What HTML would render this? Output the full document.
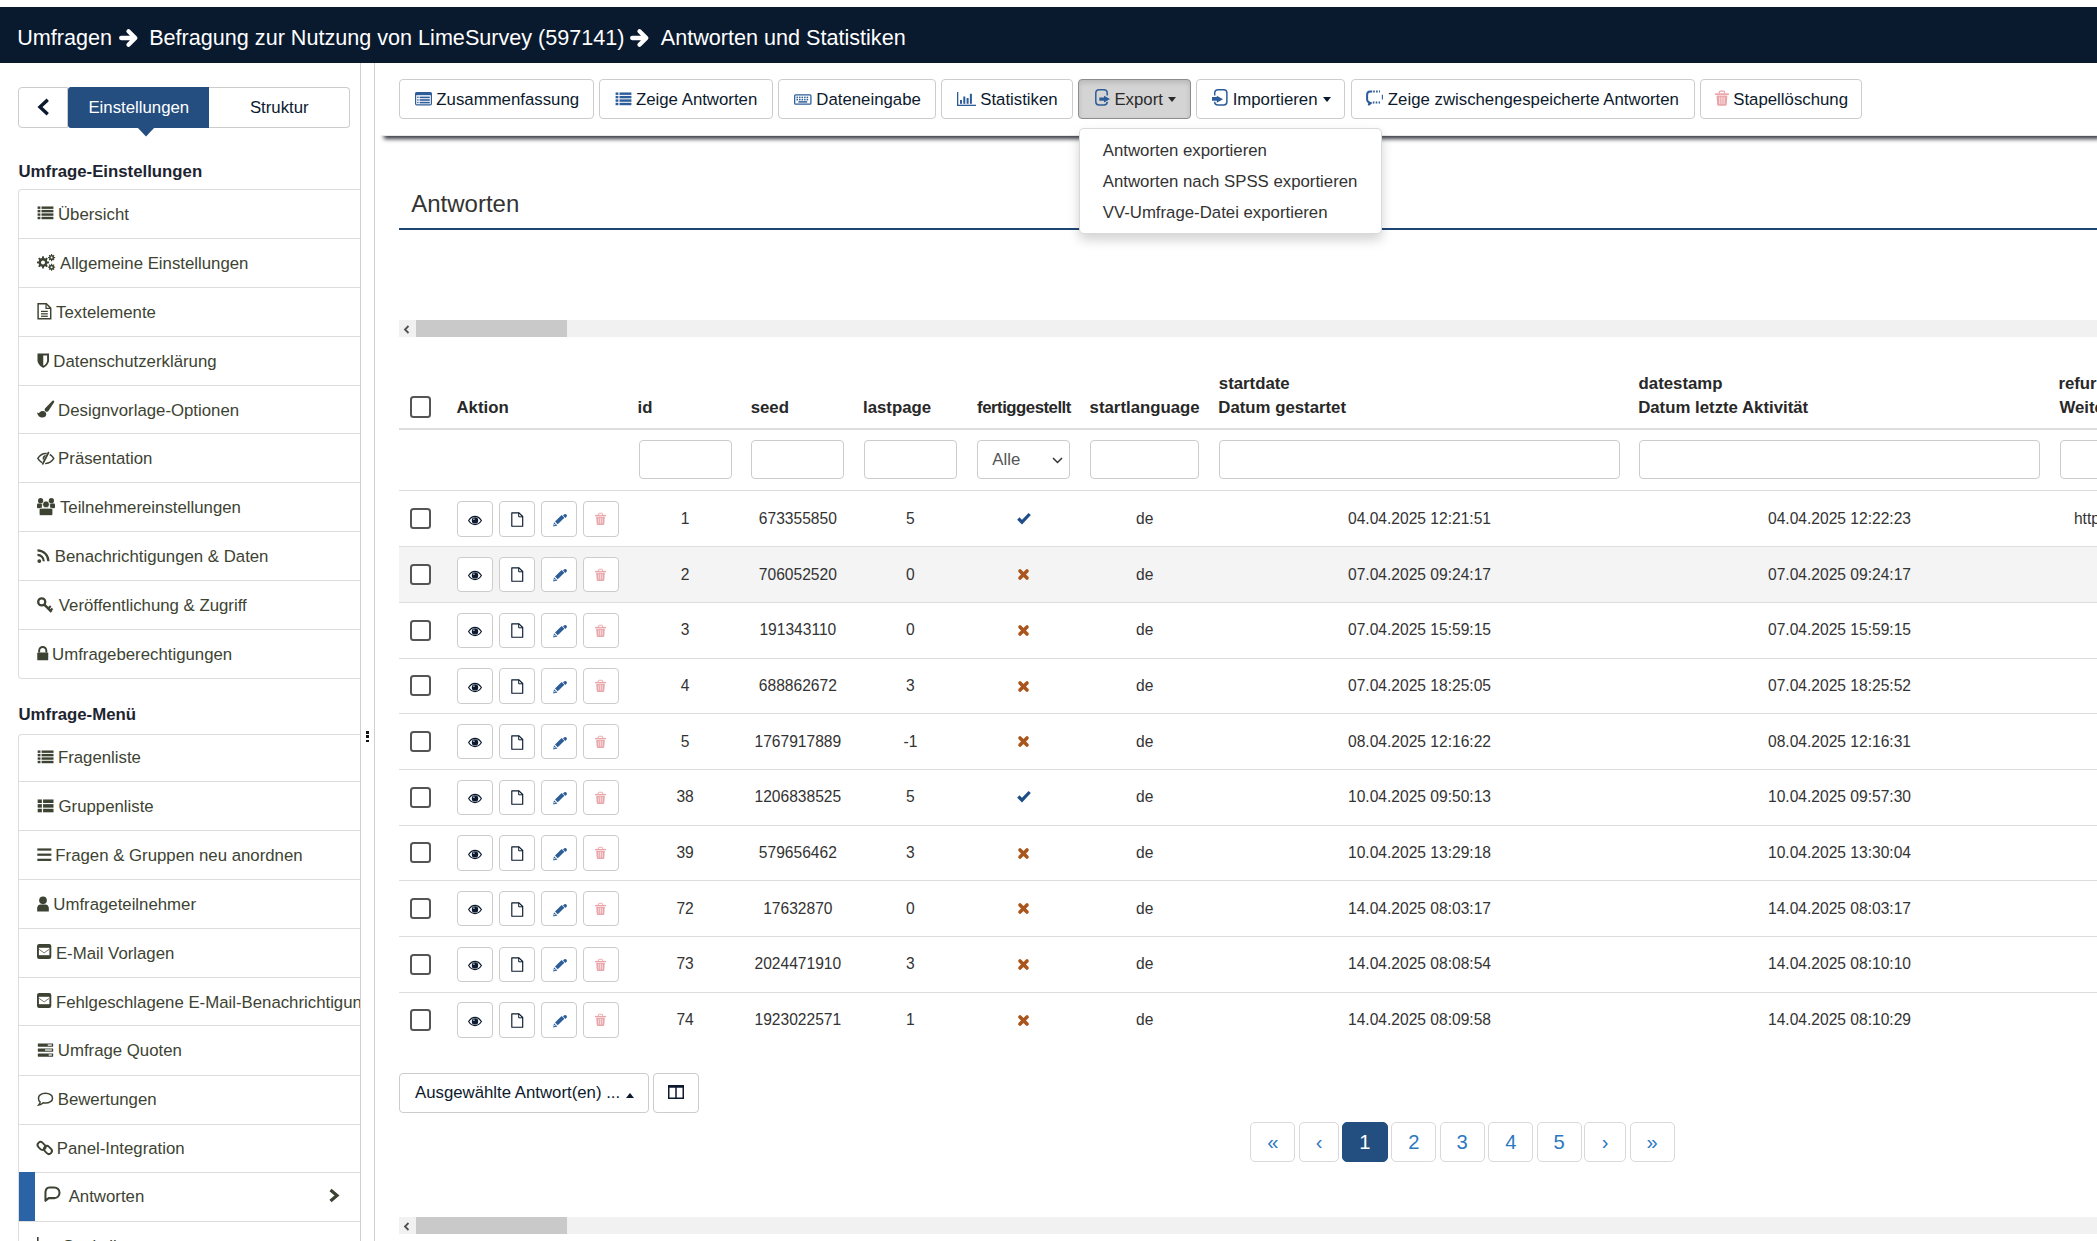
<!DOCTYPE html>
<html><head><meta charset="utf-8"><title>Antworten</title>
<style>
html,body{margin:0;padding:0;background:#fff;}
body{width:2097px;height:1241px;overflow:hidden;position:relative;font-family:"Liberation Sans", sans-serif;}
.t{position:absolute;white-space:nowrap;line-height:1;}
.r{position:absolute;box-sizing:border-box;}
.i{position:absolute;overflow:visible;}
</style></head><body>
<div class="r" style="left:0.00px;top:7.00px;width:2097.00px;height:56.00px;background:#091a2f;"></div>
<div class="t" style="left:17.20px;top:27.10px;font-size:21.6px;color:#fff;font-weight:normal;">Umfragen</div>
<svg class="i" style="left:118.60px;top:28.00px;" width="19" height="20" viewBox="0 0 19 20" fill="currentColor"><path d="M2.2 10H15.5M9.5 3.2L16.3 10L9.5 16.8" fill="none" stroke="#fff" stroke-width="4.3" stroke-linecap="round" stroke-linejoin="round"/></svg>
<div class="t" style="left:149.20px;top:27.10px;font-size:21.6px;color:#fff;font-weight:normal;">Befragung zur Nutzung von LimeSurvey (597141)</div>
<svg class="i" style="left:630.40px;top:28.00px;" width="19" height="20" viewBox="0 0 19 20" fill="currentColor"><path d="M2.2 10H15.5M9.5 3.2L16.3 10L9.5 16.8" fill="none" stroke="#fff" stroke-width="4.3" stroke-linecap="round" stroke-linejoin="round"/></svg>
<div class="t" style="left:660.80px;top:27.10px;font-size:21.6px;color:#fff;font-weight:normal;">Antworten und Statistiken</div>
<div class="r" style="left:18.00px;top:87.00px;width:50.00px;height:41.00px;border:1px solid #ccc;border-radius:4px 0 0 4px;background:#fff;"></div>
<svg class="i" style="left:36.00px;top:98.00px;" width="14" height="18" viewBox="0 0 14 18" fill="currentColor"><path d="M10.5 3L4 9L10.5 15" fill="none" stroke="#0b1a2e" stroke-width="3.4" stroke-linecap="square"/></svg>
<div class="r" style="left:209.00px;top:87.00px;width:141.00px;height:41.00px;border:1px solid #ccc;border-left:none;border-radius:0 4px 4px 0;background:#fff;"></div>
<div class="r" style="left:68.00px;top:87.00px;width:141.00px;height:41.00px;background:#234e7f;border-radius:3px 0 0 3px;"></div>
<svg class="i" style="left:137.00px;top:127.00px;" width="18" height="10" viewBox="0 0 18 10" fill="currentColor"><path d="M0 0H18L9 9.5Z" fill="#234e7f"/></svg>
<div class="t" style="left:-161.20px;width:600px;text-align:center;top:100.10px;font-size:16.8px;color:#fff;font-weight:normal;">Einstellungen</div>
<div class="t" style="left:-20.70px;width:600px;text-align:center;top:100.10px;font-size:16.8px;color:#0b1a2e;font-weight:normal;">Struktur</div>
<div class="t" style="left:18.50px;top:164.10px;font-size:16.8px;color:#1d2430;font-weight:bold;">Umfrage-Einstellungen</div>
<div class="t" style="left:18.50px;top:707.10px;font-size:16.8px;color:#1d2430;font-weight:bold;">Umfrage-Menü</div>
<div style="position:absolute;left:0;top:0;width:360px;height:1241px;overflow:hidden">
<div class="r" style="left:18.00px;top:189.00px;width:343.00px;height:490.00px;border:1px solid #ddd;border-right:none;border-radius:4px 0 0 4px;background:#fff;"></div>
<div class="r" style="left:19.00px;top:238.00px;width:341.00px;height:1.00px;background:#ddd;"></div>
<div class="r" style="left:19.00px;top:287.00px;width:341.00px;height:1.00px;background:#ddd;"></div>
<div class="r" style="left:19.00px;top:336.00px;width:341.00px;height:1.00px;background:#ddd;"></div>
<div class="r" style="left:19.00px;top:385.00px;width:341.00px;height:1.00px;background:#ddd;"></div>
<div class="r" style="left:19.00px;top:433.00px;width:341.00px;height:1.00px;background:#ddd;"></div>
<div class="r" style="left:19.00px;top:482.00px;width:341.00px;height:1.00px;background:#ddd;"></div>
<div class="r" style="left:19.00px;top:531.00px;width:341.00px;height:1.00px;background:#ddd;"></div>
<div class="r" style="left:19.00px;top:580.00px;width:341.00px;height:1.00px;background:#ddd;"></div>
<div class="r" style="left:19.00px;top:629.00px;width:341.00px;height:1.00px;background:#ddd;"></div>
<svg class="i" style="left:37.00px;top:206.40px;" width="17" height="13.6" viewBox="0 0 17 14.6" fill="#3d4333"><rect x="0" y="0.5" width="3" height="2.6"/><rect x="0" y="4.2" width="3" height="2.6"/><rect x="0" y="7.9" width="3" height="2.6"/><rect x="0" y="11.6" width="3" height="2.6"/><rect x="4.2" y="0.5" width="12.8" height="2.6"/><rect x="4.2" y="4.2" width="12.8" height="2.6"/><rect x="4.2" y="7.9" width="12.8" height="2.6"/><rect x="4.2" y="11.6" width="12.8" height="2.6"/></svg>
<div class="t" style="left:58.00px;top:207.10px;font-size:16.8px;color:#3d4333;font-weight:normal;">Übersicht</div>
<svg class="i" style="left:37.00px;top:254.30px;" width="18.3" height="17" viewBox="0 0 18.3 17" fill="#3d4333"><path fill-rule="evenodd" d="M4.98 4.02 L5.19 2.35 L6.81 2.35 L7.02 4.02 L8.38 4.58 L9.70 3.55 L10.85 4.70 L9.82 6.02 L10.38 7.38 L12.05 7.59 L12.05 9.21 L10.38 9.42 L9.82 10.78 L10.85 12.10 L9.70 13.25 L8.38 12.22 L7.02 12.78 L6.81 14.45 L5.19 14.45 L4.98 12.78 L3.62 12.22 L2.30 13.25 L1.15 12.10 L2.18 10.78 L1.62 9.42 L-0.05 9.21 L-0.05 7.59 L1.62 7.38 L2.18 6.02 L1.15 4.70 L2.30 3.55 L3.62 4.58ZM4.00 8.40A2.0 2.0 0 1 0 8.00 8.40A2.0 2.0 0 1 0 4.00 8.40ZM13.98 1.07 L14.08 0.04 L15.12 0.04 L15.22 1.07 L15.95 1.38 L16.75 0.71 L17.49 1.45 L16.82 2.25 L17.13 2.98 L18.16 3.08 L18.16 4.12 L17.13 4.22 L16.82 4.95 L17.49 5.75 L16.75 6.49 L15.95 5.82 L15.22 6.13 L15.12 7.16 L14.08 7.16 L13.98 6.13 L13.25 5.82 L12.45 6.49 L11.71 5.75 L12.38 4.95 L12.07 4.22 L11.04 4.12 L11.04 3.08 L12.07 2.98 L12.38 2.25 L11.71 1.45 L12.45 0.71 L13.25 1.38ZM13.60 3.60A1.0 1.0 0 1 0 15.60 3.60A1.0 1.0 0 1 0 13.60 3.60ZM13.98 10.67 L14.08 9.64 L15.12 9.64 L15.22 10.67 L15.95 10.98 L16.75 10.31 L17.49 11.05 L16.82 11.85 L17.13 12.58 L18.16 12.68 L18.16 13.72 L17.13 13.82 L16.82 14.55 L17.49 15.35 L16.75 16.09 L15.95 15.42 L15.22 15.73 L15.12 16.76 L14.08 16.76 L13.98 15.73 L13.25 15.42 L12.45 16.09 L11.71 15.35 L12.38 14.55 L12.07 13.82 L11.04 13.72 L11.04 12.68 L12.07 12.58 L12.38 11.85 L11.71 11.05 L12.45 10.31 L13.25 10.98ZM13.60 13.20A1.0 1.0 0 1 0 15.60 13.20A1.0 1.0 0 1 0 13.60 13.20Z"/></svg>
<div class="t" style="left:59.97px;top:256.10px;font-size:16.8px;color:#3d4333;font-weight:normal;">Allgemeine Einstellungen</div>
<svg class="i" style="left:37.00px;top:302.80px;" width="14.8" height="16.5" viewBox="0 0 15 17" fill="#3d4333"><path d="M1 0.8H9.5L14 5.3V16.2H1Z" fill="none" stroke="#3d4333" stroke-width="1.5"/><path d="M9.2 0.8V5.6H14" fill="none" stroke="#3d4333" stroke-width="1.3"/><rect x="4" y="8" width="7" height="1.3"/><rect x="4" y="10.5" width="7" height="1.3"/><rect x="4" y="13" width="7" height="1.3"/></svg>
<div class="t" style="left:56.12px;top:305.10px;font-size:16.8px;color:#3d4333;font-weight:normal;">Textelemente</div>
<svg class="i" style="left:37.00px;top:352.60px;" width="12.5" height="15.5" viewBox="0 0 13 16" fill="#3d4333"><path d="M0.5 0.5H12.5V7.5C12.5 11.5 9 14 6.5 15.5C4 14 0.5 11.5 0.5 7.5Z"/><path d="M6.5 2.5H10.5V7.5C10.5 10.5 8.5 12.2 6.5 13.3Z" fill="#fff"/></svg>
<div class="t" style="left:53.32px;top:354.10px;font-size:16.8px;color:#3d4333;font-weight:normal;">Datenschutzerklärung</div>
<svg class="i" style="left:37.00px;top:399.80px;" width="17.6" height="17.6" viewBox="0 0 17.6 17.6" fill="#3d4333"><path d="M16.2 0.5C17.2 0.5 17.6 1.6 17 2.5L11.6 10.8C10.9 11.9 9.3 12.1 8.3 11.2C7.4 10.4 7.4 9.1 8.2 8.2L15 1.2C15.3 0.8 15.7 0.5 16.2 0.5Z"/><path d="M0 12.3C0.8 13.2 1.9 13.1 2.5 12.4C3.3 11.4 4.5 10.9 5.8 10.9C7.8 10.9 9.3 12.4 9.3 14.3C9.3 16.3 7.6 17.6 5.3 17.6C2.6 17.6 0.5 15.8 0 12.3Z"/></svg>
<div class="t" style="left:58.12px;top:403.10px;font-size:16.8px;color:#3d4333;font-weight:normal;">Designvorlage-Optionen</div>
<svg class="i" style="left:37.00px;top:452.10px;" width="17.6" height="12.8" viewBox="0 0 17.6 12.8" fill="#3d4333"><path d="M0.8 6.4C2.8 3.2 5.6 1.4 8.8 1.4C12 1.4 14.8 3.2 16.8 6.4C14.8 9.6 12 11.4 8.8 11.4C5.6 11.4 2.8 9.6 0.8 6.4Z" fill="none" stroke="#3d4333" stroke-width="1.5"/><path d="M8.8 3C7 3 5.6 4.5 5.6 6.4C5.6 7.6 6.2 8.6 7 9.2L9.6 3.1Z"/><path d="M12.6 -0.5L5.4 13.2" stroke="#fff" stroke-width="3.2"/><path d="M11.8 0L5.4 12.5" stroke="#3d4333" stroke-width="1.7"/></svg>
<div class="t" style="left:58.12px;top:451.10px;font-size:16.8px;color:#3d4333;font-weight:normal;">Präsentation</div>
<svg class="i" style="left:37.00px;top:497.90px;" width="18" height="17.6" viewBox="0 0 18 17.6" fill="#3d4333"><circle cx="3.6" cy="2.7" r="2.6"/><circle cx="14.4" cy="2.7" r="2.6"/><rect x="0" y="5.6" width="4.9" height="4.6" rx="1"/><rect x="13.1" y="5.6" width="4.9" height="4.6" rx="1"/><circle cx="9" cy="6.4" r="3.4" stroke="#fff" stroke-width="0.7"/><rect x="2.2" y="10.2" width="13.6" height="7.4" rx="1.6" stroke="#fff" stroke-width="0.7"/></svg>
<div class="t" style="left:59.92px;top:500.10px;font-size:16.8px;color:#3d4333;font-weight:normal;">Teilnehmereinstellungen</div>
<svg class="i" style="left:37.00px;top:548.60px;" width="13.7" height="14" viewBox="0 0 15 16" fill="#3d4333"><circle cx="2.3" cy="13.8" r="2.2"/><path d="M0.2 6.8A7.2 7.2 0 0 1 7.4 14" fill="none" stroke="#3d4333" stroke-width="2.5"/><path d="M0.2 1.5A12.5 12.5 0 0 1 12.7 14" fill="none" stroke="#3d4333" stroke-width="2.5"/></svg>
<div class="t" style="left:54.82px;top:549.10px;font-size:16.8px;color:#3d4333;font-weight:normal;">Benachrichtigungen &amp; Daten</div>
<svg class="i" style="left:37.00px;top:597.10px;" width="16" height="15" viewBox="0 0 17 16" fill="#3d4333"><circle cx="5" cy="5.2" r="3.8" fill="none" stroke="#3d4333" stroke-width="2.4"/><path d="M7.5 7.8L15.5 15.8" stroke="#3d4333" stroke-width="2.6"/><path d="M12 12.3L14.6 9.7M14.2 14.5L16.5 12.2" stroke="#3d4333" stroke-width="2.2"/></svg>
<div class="t" style="left:58.83px;top:598.10px;font-size:16.8px;color:#3d4333;font-weight:normal;">Veröffentlichung &amp; Zugriff</div>
<svg class="i" style="left:37.00px;top:646.10px;" width="11.5" height="15" viewBox="0 0 13.2 16.5" fill="#3d4333"><path d="M2.5 7V4.8A4.1 4.1 0 0 1 10.7 4.8V7" fill="none" stroke="#3d4333" stroke-width="2.2"/><rect x="0.3" y="7" width="12.6" height="9" rx="1"/></svg>
<div class="t" style="left:52.10px;top:647.10px;font-size:16.8px;color:#3d4333;font-weight:normal;">Umfrageberechtigungen</div>
<div class="r" style="left:18.00px;top:734.00px;width:343.00px;height:537.00px;border:1px solid #ddd;border-right:none;border-radius:4px 0 0 4px;background:#fff;"></div>
<div class="r" style="left:19.00px;top:781.00px;width:341.00px;height:1.00px;background:#ddd;"></div>
<div class="r" style="left:19.00px;top:830.00px;width:341.00px;height:1.00px;background:#ddd;"></div>
<div class="r" style="left:19.00px;top:879.00px;width:341.00px;height:1.00px;background:#ddd;"></div>
<div class="r" style="left:19.00px;top:928.00px;width:341.00px;height:1.00px;background:#ddd;"></div>
<div class="r" style="left:19.00px;top:977.00px;width:341.00px;height:1.00px;background:#ddd;"></div>
<div class="r" style="left:19.00px;top:1025.00px;width:341.00px;height:1.00px;background:#ddd;"></div>
<div class="r" style="left:19.00px;top:1075.00px;width:341.00px;height:1.00px;background:#ddd;"></div>
<div class="r" style="left:19.00px;top:1124.00px;width:341.00px;height:1.00px;background:#ddd;"></div>
<div class="r" style="left:19.00px;top:1172.00px;width:341.00px;height:1.00px;background:#ddd;"></div>
<div class="r" style="left:19.00px;top:1221.00px;width:341.00px;height:1.00px;background:#ddd;"></div>
<svg class="i" style="left:37.00px;top:750.00px;" width="17.2" height="13.6" viewBox="0 0 17 14.6" fill="#3d4333"><rect x="0" y="0.5" width="3" height="2.6"/><rect x="0" y="4.2" width="3" height="2.6"/><rect x="0" y="7.9" width="3" height="2.6"/><rect x="0" y="11.6" width="3" height="2.6"/><rect x="4.2" y="0.5" width="12.8" height="2.6"/><rect x="4.2" y="4.2" width="12.8" height="2.6"/><rect x="4.2" y="7.9" width="12.8" height="2.6"/><rect x="4.2" y="11.6" width="12.8" height="2.6"/></svg>
<div class="t" style="left:57.92px;top:750.10px;font-size:16.8px;color:#3d4333;font-weight:normal;">Fragenliste</div>
<svg class="i" style="left:37.00px;top:798.80px;" width="17.2" height="13.6" viewBox="0 0 17 14.6" fill="#3d4333"><rect x="0" y="0.5" width="4.5" height="3.8"/><rect x="0" y="5.5" width="4.5" height="3.8"/><rect x="0" y="10.5" width="4.5" height="3.8"/><rect x="5.8" y="0.5" width="11.2" height="3.8"/><rect x="5.8" y="5.5" width="11.2" height="3.8"/><rect x="5.8" y="10.5" width="11.2" height="3.8"/></svg>
<div class="t" style="left:58.56px;top:799.10px;font-size:16.8px;color:#3d4333;font-weight:normal;">Gruppenliste</div>
<svg class="i" style="left:37.00px;top:847.20px;" width="14.7" height="15" viewBox="0 0 15 16" fill="#3d4333"><rect x="0" y="1.5" width="15" height="2.4"/><rect x="0" y="7" width="15" height="2.4"/><rect x="0" y="12.5" width="15" height="2.4"/></svg>
<div class="t" style="left:55.32px;top:848.10px;font-size:16.8px;color:#3d4333;font-weight:normal;">Fragen &amp; Gruppen neu anordnen</div>
<svg class="i" style="left:37.00px;top:895.70px;" width="12" height="15.5" viewBox="0 0 12.4 16.5" fill="#3d4333"><circle cx="6.2" cy="4.6" r="4.1"/><path d="M0 16.5V13C0 10.5 1.5 9 3.8 9H8.6C10.9 9 12.4 10.5 12.4 13V16.5Z"/></svg>
<div class="t" style="left:53.30px;top:897.10px;font-size:16.8px;color:#3d4333;font-weight:normal;">Umfrageteilnehmer</div>
<svg class="i" style="left:37.00px;top:944.40px;" width="14.3" height="14.9" viewBox="0 0 14.3 14.9" fill="#3d4333"><rect x="0" y="0" width="14.3" height="14.9" rx="2.2"/><rect x="1.9" y="3.8" width="10.5" height="7.4" fill="#fff"/><path d="M2.2 5.4L7.15 8.9L12.1 5.4" fill="none" stroke="#3d4333" stroke-width="0.9" opacity="0.8"/></svg>
<div class="t" style="left:55.92px;top:946.10px;font-size:16.8px;color:#3d4333;font-weight:normal;">E-Mail Vorlagen</div>
<svg class="i" style="left:37.00px;top:993.40px;" width="14.3" height="14.9" viewBox="0 0 14.3 14.9" fill="#3d4333"><rect x="0" y="0" width="14.3" height="14.9" rx="2.2"/><rect x="1.9" y="3.8" width="10.5" height="7.4" fill="#fff"/><path d="M2.2 5.4L7.15 8.9L12.1 5.4" fill="none" stroke="#3d4333" stroke-width="0.9" opacity="0.8"/></svg>
<div class="t" style="left:55.92px;top:995.10px;font-size:16.8px;color:#3d4333;font-weight:normal;">Fehlgeschlagene E-Mail-Benachrichtigungen</div>
<svg class="i" style="left:37.00px;top:1042.50px;" width="17" height="14" viewBox="0 0 17 15.5" fill="#3d4333"><rect x="0" y="0.5" width="17" height="3.6" rx="0.5"/><rect x="0" y="6" width="17" height="3.6" rx="0.5"/><rect x="0" y="11.5" width="17" height="3.6" rx="0.5"/><rect x="11" y="1.6" width="4.5" height="1.4" fill="#fff"/><rect x="8" y="7.1" width="7.5" height="1.4" fill="#fff"/><rect x="12" y="12.6" width="3.5" height="1.4" fill="#fff"/></svg>
<div class="t" style="left:57.80px;top:1043.10px;font-size:16.8px;color:#3d4333;font-weight:normal;">Umfrage Quoten</div>
<svg class="i" style="left:37.00px;top:1091.40px;" width="17" height="15" viewBox="0 0 17 16" fill="#3d4333"><path d="M8.5 2.3C12.8 2.3 16 4.6 16 7.6C16 10.6 12.8 12.9 8.5 12.9C7.6 12.9 6.8 12.8 6 12.6C4.8 13.8 3 14.8 1.2 15C2 14.1 2.7 13 2.8 11.8C1.6 10.8 1 9.3 1 7.6C1 4.6 4.2 2.3 8.5 2.3Z" fill="none" stroke="#3d4333" stroke-width="1.6"/></svg>
<div class="t" style="left:57.72px;top:1092.10px;font-size:16.8px;color:#3d4333;font-weight:normal;">Bewertungen</div>
<svg class="i" style="left:37.00px;top:1139.90px;" width="15.5" height="15.5" viewBox="0 0 16.5 17" fill="#3d4333"><g fill="none" stroke="#3d4333" stroke-width="2.1"><rect x="1.5" y="1.8" width="6.5" height="9.5" rx="3.2" transform="rotate(-45 4.75 6.55)"/><rect x="8.5" y="6.2" width="6.5" height="9.5" rx="3.2" transform="rotate(-45 11.75 10.95)"/></g></svg>
<div class="t" style="left:56.82px;top:1141.10px;font-size:16.8px;color:#3d4333;font-weight:normal;">Panel-Integration</div>
<div class="t" style="left:68.67px;top:1189.10px;font-size:16.8px;color:#3d4333;font-weight:normal;">Antworten</div>
<svg class="i" style="left:37.00px;top:1237.00px;" width="17" height="16" viewBox="0 0 17 16" fill="#3d4333"><rect x="0" y="0" width="1.6" height="16"/><rect x="0" y="14.4" width="17" height="1.6"/><rect x="3.3" y="9" width="2.5" height="4.5"/><rect x="7.3" y="5" width="2.5" height="8.5"/><rect x="11.3" y="7" width="2.5" height="6.5"/></svg>
<div class="t" style="left:62.64px;top:1239.10px;font-size:16.8px;color:#3d4333;font-weight:normal;">Statistik</div>
<div class="r" style="left:19.00px;top:1172.00px;width:16.00px;height:49.00px;background:#2b63a7;"></div>
<svg class="i" style="left:43.00px;top:1186.00px;" width="17.5" height="16" viewBox="0 0 18 16.5" fill="#3d4333"><path d="M6.5 1.5H11.5C14.8 1.5 17 3.7 17 7C17 10.3 14.8 12.5 11.5 12.5H5.8L2.5 15.3V7C2.5 3.7 4 1.5 6.5 1.5Z" fill="none" stroke="#3d4333" stroke-width="2.1" stroke-linejoin="round"/></svg>
<svg class="i" style="left:327.50px;top:1188.00px;" width="11.5" height="15" viewBox="0 0 11.5 15" fill="currentColor"><path d="M2.5 2L9 7.5L2.5 13" fill="none" stroke="#3d4333" stroke-width="3.2"/></svg>
</div>
<div class="r" style="left:360.00px;top:63.00px;width:1.00px;height:1178.00px;background:#d0d0d0;"></div>
<div class="r" style="left:374.00px;top:63.00px;width:1.00px;height:1178.00px;background:#d0d0d0;"></div>
<div class="r" style="left:366.00px;top:731.00px;width:3.00px;height:3.00px;background:#111;"></div>
<div class="r" style="left:366.00px;top:735.00px;width:3.00px;height:3.00px;background:#111;"></div>
<div class="r" style="left:366.00px;top:740.00px;width:3.00px;height:2.00px;background:#111;"></div>
<div class="r" style="left:381.00px;top:126.00px;width:1716.00px;height:10.00px;background:#fff;box-shadow:3px 3px 4px rgba(20,22,35,0.85);"></div>
<div class="r" style="left:377.00px;top:70.00px;width:1720.00px;height:66.00px;background:#fff;"></div>
<div class="r" style="left:381.00px;top:135.00px;width:1716.00px;height:1.00px;background:#e9e9e9;"></div>
<div class="r" style="left:399.00px;top:79.00px;width:195.00px;height:40.00px;border:1px solid #ccc;border-radius:4px;background:#fff;"></div>
<svg class="i" style="left:414.90px;top:92.00px;" width="17" height="13.5" viewBox="0 0 17 13.5" fill="#2c5d98"><rect x="0.6" y="0.6" width="15.8" height="12.3" rx="1.2" fill="none" stroke="#2c5d98" stroke-width="1.2"/><rect x="0.6" y="0.6" width="15.8" height="2.6" fill="#2c5d98"/><rect x="2.2" y="4.6" width="1.4" height="1.4"/><rect x="4.6" y="4.6" width="10.2" height="1.6"/><rect x="2.2" y="7.2" width="1.4" height="1.4"/><rect x="4.6" y="7.2" width="10.2" height="1.6"/><rect x="2.2" y="9.8" width="1.4" height="1.4"/><rect x="4.6" y="9.8" width="10.2" height="1.6"/></svg>
<div class="t" style="left:436.37px;top:92.10px;font-size:16.8px;color:#0c1a2d;font-weight:normal;">Zusammenfassung</div>
<div class="r" style="left:599.00px;top:79.00px;width:174.00px;height:40.00px;border:1px solid #ccc;border-radius:4px;background:#fff;"></div>
<svg class="i" style="left:614.50px;top:92.00px;" width="17" height="13.6" viewBox="0 0 17 14.6" fill="#2c5d98"><rect x="0" y="0.5" width="3" height="2.6"/><rect x="0" y="4.2" width="3" height="2.6"/><rect x="0" y="7.9" width="3" height="2.6"/><rect x="0" y="11.6" width="3" height="2.6"/><rect x="4.2" y="0.5" width="12.8" height="2.6"/><rect x="4.2" y="4.2" width="12.8" height="2.6"/><rect x="4.2" y="7.9" width="12.8" height="2.6"/><rect x="4.2" y="11.6" width="12.8" height="2.6"/></svg>
<div class="t" style="left:635.97px;top:92.10px;font-size:16.8px;color:#0c1a2d;font-weight:normal;">Zeige Antworten</div>
<div class="r" style="left:778.00px;top:79.00px;width:158.00px;height:40.00px;border:1px solid #ccc;border-radius:4px;background:#fff;"></div>
<svg class="i" style="left:794.00px;top:94.00px;" width="17.6" height="11" viewBox="0 0 18 11" fill="#2c5d98"><rect x="0.7" y="0.7" width="16.6" height="9.6" rx="1" fill="none" stroke="#2c5d98" stroke-width="1.3"/><rect x="2.5" y="2.6" width="1.6" height="1.5"/><rect x="5.1" y="2.6" width="1.6" height="1.5"/><rect x="7.7" y="2.6" width="1.6" height="1.5"/><rect x="10.3" y="2.6" width="1.6" height="1.5"/><rect x="12.9" y="2.6" width="1.6" height="1.5"/><rect x="2.5" y="4.9" width="1.6" height="1.5"/><rect x="5.1" y="4.9" width="1.6" height="1.5"/><rect x="7.7" y="4.9" width="1.6" height="1.5"/><rect x="10.3" y="4.9" width="1.6" height="1.5"/><rect x="12.9" y="4.9" width="1.6" height="1.5"/><rect x="4.5" y="7.2" width="9" height="1.5"/></svg>
<div class="t" style="left:816.32px;top:92.10px;font-size:16.8px;color:#0c1a2d;font-weight:normal;">Dateneingabe</div>
<div class="r" style="left:941.00px;top:79.00px;width:132.00px;height:40.00px;border:1px solid #ccc;border-radius:4px;background:#fff;"></div>
<svg class="i" style="left:956.60px;top:91.80px;" width="19" height="14" viewBox="0 0 19 14" fill="#2c5d98"><rect x="0" y="0" width="1.3" height="14"/><rect x="0" y="12.7" width="19" height="1.3"/><rect x="3" y="8" width="2" height="3.8"/><rect x="6.3" y="4.5" width="2" height="7.3"/><rect x="9.6" y="6" width="2" height="5.8"/><rect x="12.9" y="1.8" width="2" height="10"/></svg>
<div class="t" style="left:980.24px;top:92.10px;font-size:16.8px;color:#0c1a2d;font-weight:normal;">Statistiken</div>
<div class="r" style="left:1078.00px;top:79.00px;width:113.00px;height:40.00px;border:1px solid #8c8c8c;border-radius:4px;background:#d4d4d4;box-shadow:inset 0 3px 5px rgba(0,0,0,.125);"></div>
<svg class="i" style="left:1095.00px;top:89.00px;" width="15" height="17" viewBox="0 0 15 17" fill="#2c5d98"><path d="M12.2 6.4V4C12.2 2 11 0.8 9 0.8H4C2 0.8 0.8 2 0.8 4V12.8C0.8 14.8 2 16 4 16H9C11 16 12.2 14.8 12.2 12.8V13.4" fill="none" stroke="#2c5d98" stroke-width="1.5"/><path d="M4.3 8.4H9V6.7L15 10.1L9 13.5V11.8H4.3Z"/></svg>
<div class="t" style="left:1114.42px;top:92.10px;font-size:16.8px;color:#2a2a2a;font-weight:normal;">Export</div>
<svg class="i" style="left:1168.20px;top:97.00px;" width="8" height="5" viewBox="0 0 8 5" fill="currentColor"><path d="M0 0H8L4 5Z" fill="#2a2a2a"/></svg>
<div class="r" style="left:1196.00px;top:79.00px;width:149.00px;height:40.00px;border:1px solid #ccc;border-radius:4px;background:#fff;"></div>
<svg class="i" style="left:1212.00px;top:89.00px;" width="15.7" height="17" viewBox="0 0 15.7 17" fill="#2c5d98"><path d="M2.7 6.4V4C2.7 2 4 0.8 6 0.8H11.8C13.8 0.8 14.9 2 14.9 4V12.8C14.9 14.8 13.8 16 11.8 16H6C4 16 2.7 14.8 2.7 12.8V13.4" fill="none" stroke="#2c5d98" stroke-width="1.5"/><path d="M0 8H4.8V6.7L11 10.2L4.8 13.7V11.8H0Z"/></svg>
<div class="t" style="left:1232.65px;top:92.10px;font-size:16.8px;color:#0c1a2d;font-weight:normal;">Importieren</div>
<svg class="i" style="left:1323.00px;top:97.00px;" width="8" height="5" viewBox="0 0 8 5" fill="currentColor"><path d="M0 0H8L4 5Z" fill="#0c1a2d"/></svg>
<div class="r" style="left:1351.00px;top:79.00px;width:344.00px;height:40.00px;border:1px solid #ccc;border-radius:4px;background:#fff;"></div>
<svg class="i" style="left:1366.00px;top:90.00px;" width="17" height="15" viewBox="0 0 17 15" fill="#2c5d98"><path d="M6.2 1.5H4.4C2.4 1.5 1.1 2.8 1.1 4.8V9.3C1.1 11 2 12.1 3.5 12.5L2.8 14.6L5.6 12.5" fill="none" stroke="#2c5d98" stroke-width="2" stroke-linejoin="round"/><path d="M7.2 1.5H14M6.8 12.5H14" fill="none" stroke="#2c5d98" stroke-width="2" stroke-dasharray="1.6 1.3"/><path d="M16.4 4.8V9.4" stroke="#2c5d98" stroke-width="1.1"/></svg>
<div class="t" style="left:1387.87px;top:92.10px;font-size:16.8px;color:#0c1a2d;font-weight:normal;">Zeige zwischengespeicherte Antworten</div>
<div class="r" style="left:1700.00px;top:79.00px;width:162.00px;height:40.00px;border:1px solid #ccc;border-radius:4px;background:#fff;"></div>
<svg class="i" style="left:1715.00px;top:91.30px;" width="13.9" height="14.8" viewBox="0 0 14 15" fill="#e9a6aa"><path d="M4.3 2.5V1.2C4.3 0.6 4.8 0.2 5.4 0.2H8.6C9.2 0.2 9.7 0.6 9.7 1.2V2.5" fill="none" stroke="#e9a6aa" stroke-width="1.2"/><rect x="0" y="2.3" width="14" height="1.7"/><path d="M1.5 4.5H12.5L11.8 14C11.7 14.6 11.3 15 10.7 15H3.3C2.7 15 2.3 14.6 2.2 14Z"/><rect x="4.3" y="6" width="1" height="7.3" fill="#fff" opacity=".7"/><rect x="6.5" y="6" width="1" height="7.3" fill="#fff" opacity=".7"/><rect x="8.7" y="6" width="1" height="7.3" fill="#fff" opacity=".7"/></svg>
<div class="t" style="left:1733.24px;top:92.10px;font-size:16.8px;color:#0c1a2d;font-weight:normal;">Stapellöschung</div>
<div class="t" style="left:411.25px;top:192.10px;font-size:24px;color:#333;font-weight:normal;">Antworten</div>
<div class="r" style="left:399.00px;top:228.00px;width:1698.00px;height:2.00px;background:#1d4677;"></div>
<div class="r" style="left:399.00px;top:320.00px;width:1698.00px;height:17.00px;background:#f1f1f1;"></div>
<div class="r" style="left:416.00px;top:320.00px;width:151.00px;height:17.00px;background:#c9c9c9;"></div>
<svg class="i" style="left:403.00px;top:324.50px;" width="8" height="9" viewBox="0 0 8 9" fill="currentColor"><path d="M5.5 1L2 4.5L5.5 8" fill="none" stroke="#505050" stroke-width="1.8"/></svg>
<div class="r" style="left:410.00px;top:396.00px;width:21.00px;height:22.00px;border:2px solid #555;border-radius:3.5px;background:#fff;"></div>
<div class="t" style="left:456.48px;top:400.10px;font-size:16.8px;color:#282828;font-weight:bold;">Aktion</div>
<div class="t" style="left:637.53px;top:400.10px;font-size:16.8px;color:#282828;font-weight:bold;">id</div>
<div class="t" style="left:750.71px;top:400.10px;font-size:16.8px;color:#282828;font-weight:bold;">seed</div>
<div class="t" style="left:863.03px;top:400.10px;font-size:16.8px;color:#282828;font-weight:bold;">lastpage</div>
<div class="t" style="left:977.11px;top:400.10px;font-size:16.8px;color:#282828;font-weight:bold;letter-spacing:-0.5px;">fertiggestellt</div>
<div class="t" style="left:1089.61px;top:400.10px;font-size:16.8px;color:#282828;font-weight:bold;">startlanguage</div>
<div class="t" style="left:1218.81px;top:376.10px;font-size:16.8px;color:#282828;font-weight:bold;">startdate</div>
<div class="t" style="left:1218.28px;top:400.10px;font-size:16.8px;color:#282828;font-weight:bold;">Datum gestartet</div>
<div class="t" style="left:1638.61px;top:376.10px;font-size:16.8px;color:#282828;font-weight:bold;">datestamp</div>
<div class="t" style="left:1638.18px;top:400.10px;font-size:16.8px;color:#282828;font-weight:bold;">Datum letzte Aktivität</div>
<div class="t" style="left:2058.39px;top:376.10px;font-size:16.8px;color:#282828;font-weight:bold;">refurl</div>
<div class="t" style="left:2059.48px;top:400.10px;font-size:16.8px;color:#282828;font-weight:bold;">Weiterleitungs-URL</div>
<div class="r" style="left:399.00px;top:428.00px;width:1698.00px;height:2.00px;background:#ddd;"></div>
<div class="r" style="left:639.00px;top:440.00px;width:93.00px;height:39.00px;border:1px solid #ccc;border-radius:4px;background:#fff;"></div>
<div class="r" style="left:751.00px;top:440.00px;width:93.00px;height:39.00px;border:1px solid #ccc;border-radius:4px;background:#fff;"></div>
<div class="r" style="left:864.00px;top:440.00px;width:93.00px;height:39.00px;border:1px solid #ccc;border-radius:4px;background:#fff;"></div>
<div class="r" style="left:977.00px;top:440.00px;width:93.00px;height:39.00px;border:1px solid #ccc;border-radius:4px;background:#fff;"></div>
<div class="r" style="left:1090.00px;top:440.00px;width:109.00px;height:39.00px;border:1px solid #ccc;border-radius:4px;background:#fff;"></div>
<div class="r" style="left:1219.00px;top:440.00px;width:401.00px;height:39.00px;border:1px solid #ccc;border-radius:4px;background:#fff;"></div>
<div class="r" style="left:1639.00px;top:440.00px;width:401.00px;height:39.00px;border:1px solid #ccc;border-radius:4px;background:#fff;"></div>
<div class="r" style="left:2060.00px;top:440.00px;width:240.00px;height:39.00px;border:1px solid #ccc;border-radius:4px;background:#fff;"></div>
<div class="t" style="left:992.37px;top:452.10px;font-size:16.8px;color:#555;font-weight:normal;">Alle</div>
<svg class="i" style="left:1051.50px;top:456.50px;" width="11" height="7" viewBox="0 0 11 7" fill="currentColor"><path d="M1 1L5.5 5.5L10 1" fill="none" stroke="#333" stroke-width="1.5"/></svg>
<div class="r" style="left:399.00px;top:490.00px;width:1698.00px;height:1.00px;background:#ddd;"></div>
<div class="r" style="left:410.00px;top:508.00px;width:21.00px;height:21.00px;border:2px solid #555;border-radius:3.5px;background:#fff;"></div>
<div class="r" style="left:457.00px;top:501.00px;width:36.00px;height:36.00px;border:1px solid #ccc;border-radius:4px;background:#fff;"></div>
<div class="r" style="left:499.00px;top:501.00px;width:36.00px;height:36.00px;border:1px solid #ccc;border-radius:4px;background:#fff;"></div>
<div class="r" style="left:541.00px;top:501.00px;width:36.00px;height:36.00px;border:1px solid #ccc;border-radius:4px;background:#fff;"></div>
<div class="r" style="left:583.00px;top:501.00px;width:36.00px;height:36.00px;border:1px solid #ccc;border-radius:4px;background:#fff;"></div>
<svg class="i" style="left:467.80px;top:515.70px;" width="14" height="9" viewBox="0 0 14 9" fill="#0b1a2e"><path d="M0.6 4.5C2.6 1.5 4.8 0.4 7 0.4C9.2 0.4 11.4 1.5 13.4 4.5C11.4 7.5 9.2 8.6 7 8.6C4.8 8.6 2.6 7.5 0.6 4.5Z" fill="none" stroke="#0b1a2e" stroke-width="1.2"/><circle cx="7" cy="4.4" r="3.2"/><circle cx="5.9" cy="3.2" r="0.9" fill="#fff" opacity="0.6"/></svg>
<svg class="i" style="left:511.00px;top:511.80px;" width="12.5" height="15" viewBox="0 0 12.5 15" fill="#0b1a2e"><path d="M0.8 0.8H8L11.7 4.5V14.2H0.8Z" fill="none" stroke="#0b1a2e" stroke-width="1.15" stroke-linejoin="round"/><path d="M7.7 0.8V4.8H11.7" fill="none" stroke="#0b1a2e" stroke-width="1"/></svg>
<svg class="i" style="left:552.50px;top:513.80px;" width="13.4" height="12.6" viewBox="0 0 13.4 12.6" fill="#2c5d98"><path d="M3.4 9.0L10.0 2.4" stroke="#2c5d98" stroke-width="3.9"/><path d="M10.9 1.5L11.4 1.0C11.9 0.5 12.6 0.5 13.0 1.0C13.4 1.4 13.4 2.1 12.9 2.6L12.4 3.1Z" stroke="#2c5d98" stroke-width="1.2"/><path d="M0.2 12.4L1.0 8.2L4.4 11.6Z"/><circle cx="1.8" cy="10.6" r="0.7" fill="#fff"/></svg>
<svg class="i" style="left:595.00px;top:513.20px;" width="11" height="12" viewBox="0 0 14 15" fill="#e9a6aa"><path d="M4.3 2.5V1.2C4.3 0.6 4.8 0.2 5.4 0.2H8.6C9.2 0.2 9.7 0.6 9.7 1.2V2.5" fill="none" stroke="#e9a6aa" stroke-width="1.2"/><rect x="0" y="2.3" width="14" height="1.7"/><path d="M1.5 4.5H12.5L11.8 14C11.7 14.6 11.3 15 10.7 15H3.3C2.7 15 2.3 14.6 2.2 14Z"/><rect x="4.3" y="6" width="1" height="7.3" fill="#fff" opacity=".7"/><rect x="6.5" y="6" width="1" height="7.3" fill="#fff" opacity=".7"/><rect x="8.7" y="6" width="1" height="7.3" fill="#fff" opacity=".7"/></svg>
<div class="t" style="left:385.10px;width:600px;text-align:center;top:511.10px;font-size:15.6px;color:#333;font-weight:normal;">1</div>
<div class="t" style="left:497.85px;width:600px;text-align:center;top:511.10px;font-size:15.6px;color:#333;font-weight:normal;">673355850</div>
<div class="t" style="left:610.40px;width:600px;text-align:center;top:511.10px;font-size:15.6px;color:#333;font-weight:normal;">5</div>
<svg class="i" style="left:1016.70px;top:511.60px;" width="14" height="12.5" viewBox="0 0 14 12.5" fill="#1f4e86"><path d="M1.3 6.5L5 10.2L12.7 2" fill="none" stroke="#1f4e86" stroke-width="3.2"/></svg>
<div class="t" style="left:844.75px;width:600px;text-align:center;top:511.10px;font-size:15.6px;color:#333;font-weight:normal;">de</div>
<div class="t" style="left:1119.50px;width:600px;text-align:center;top:511.10px;font-size:15.6px;color:#333;font-weight:normal;">04.04.2025 12:21:51</div>
<div class="t" style="left:1539.50px;width:600px;text-align:center;top:511.10px;font-size:15.6px;color:#333;font-weight:normal;">04.04.2025 12:22:23</div>
<div class="t" style="left:2073.92px;top:511.10px;font-size:15.6px;color:#333;font-weight:normal;">http</div>
<div class="r" style="left:399.00px;top:546.00px;width:1698.00px;height:56.00px;background:#f4f4f4;"></div>
<div class="r" style="left:399.00px;top:546.00px;width:1698.00px;height:1.00px;background:#ddd;"></div>
<div class="r" style="left:410.00px;top:564.00px;width:21.00px;height:21.00px;border:2px solid #555;border-radius:3.5px;background:#fff;"></div>
<div class="r" style="left:457.00px;top:557.00px;width:36.00px;height:35.00px;border:1px solid #ccc;border-radius:4px;background:#fff;"></div>
<div class="r" style="left:499.00px;top:557.00px;width:36.00px;height:35.00px;border:1px solid #ccc;border-radius:4px;background:#fff;"></div>
<div class="r" style="left:541.00px;top:557.00px;width:36.00px;height:35.00px;border:1px solid #ccc;border-radius:4px;background:#fff;"></div>
<div class="r" style="left:583.00px;top:557.00px;width:36.00px;height:35.00px;border:1px solid #ccc;border-radius:4px;background:#fff;"></div>
<svg class="i" style="left:467.80px;top:571.38px;" width="14" height="9" viewBox="0 0 14 9" fill="#0b1a2e"><path d="M0.6 4.5C2.6 1.5 4.8 0.4 7 0.4C9.2 0.4 11.4 1.5 13.4 4.5C11.4 7.5 9.2 8.6 7 8.6C4.8 8.6 2.6 7.5 0.6 4.5Z" fill="none" stroke="#0b1a2e" stroke-width="1.2"/><circle cx="7" cy="4.4" r="3.2"/><circle cx="5.9" cy="3.2" r="0.9" fill="#fff" opacity="0.6"/></svg>
<svg class="i" style="left:511.00px;top:567.48px;" width="12.5" height="15" viewBox="0 0 12.5 15" fill="#0b1a2e"><path d="M0.8 0.8H8L11.7 4.5V14.2H0.8Z" fill="none" stroke="#0b1a2e" stroke-width="1.15" stroke-linejoin="round"/><path d="M7.7 0.8V4.8H11.7" fill="none" stroke="#0b1a2e" stroke-width="1"/></svg>
<svg class="i" style="left:552.50px;top:569.48px;" width="13.4" height="12.6" viewBox="0 0 13.4 12.6" fill="#2c5d98"><path d="M3.4 9.0L10.0 2.4" stroke="#2c5d98" stroke-width="3.9"/><path d="M10.9 1.5L11.4 1.0C11.9 0.5 12.6 0.5 13.0 1.0C13.4 1.4 13.4 2.1 12.9 2.6L12.4 3.1Z" stroke="#2c5d98" stroke-width="1.2"/><path d="M0.2 12.4L1.0 8.2L4.4 11.6Z"/><circle cx="1.8" cy="10.6" r="0.7" fill="#fff"/></svg>
<svg class="i" style="left:595.00px;top:568.88px;" width="11" height="12" viewBox="0 0 14 15" fill="#e9a6aa"><path d="M4.3 2.5V1.2C4.3 0.6 4.8 0.2 5.4 0.2H8.6C9.2 0.2 9.7 0.6 9.7 1.2V2.5" fill="none" stroke="#e9a6aa" stroke-width="1.2"/><rect x="0" y="2.3" width="14" height="1.7"/><path d="M1.5 4.5H12.5L11.8 14C11.7 14.6 11.3 15 10.7 15H3.3C2.7 15 2.3 14.6 2.2 14Z"/><rect x="4.3" y="6" width="1" height="7.3" fill="#fff" opacity=".7"/><rect x="6.5" y="6" width="1" height="7.3" fill="#fff" opacity=".7"/><rect x="8.7" y="6" width="1" height="7.3" fill="#fff" opacity=".7"/></svg>
<div class="t" style="left:385.10px;width:600px;text-align:center;top:567.10px;font-size:15.6px;color:#333;font-weight:normal;">2</div>
<div class="t" style="left:497.85px;width:600px;text-align:center;top:567.10px;font-size:15.6px;color:#333;font-weight:normal;">706052520</div>
<div class="t" style="left:610.40px;width:600px;text-align:center;top:567.10px;font-size:15.6px;color:#333;font-weight:normal;">0</div>
<svg class="i" style="left:1018.20px;top:569.18px;" width="11" height="11" viewBox="0 0 11 11" fill="#a9561d"><path d="M2 2L9 9M9 2L2 9" fill="none" stroke="#a9561d" stroke-width="3.6" stroke-linecap="round"/></svg>
<div class="t" style="left:844.75px;width:600px;text-align:center;top:567.10px;font-size:15.6px;color:#333;font-weight:normal;">de</div>
<div class="t" style="left:1119.50px;width:600px;text-align:center;top:567.10px;font-size:15.6px;color:#333;font-weight:normal;">07.04.2025 09:24:17</div>
<div class="t" style="left:1539.50px;width:600px;text-align:center;top:567.10px;font-size:15.6px;color:#333;font-weight:normal;">07.04.2025 09:24:17</div>
<div class="r" style="left:399.00px;top:602.00px;width:1698.00px;height:1.00px;background:#ddd;"></div>
<div class="r" style="left:410.00px;top:620.00px;width:21.00px;height:21.00px;border:2px solid #555;border-radius:3.5px;background:#fff;"></div>
<div class="r" style="left:457.00px;top:613.00px;width:36.00px;height:35.00px;border:1px solid #ccc;border-radius:4px;background:#fff;"></div>
<div class="r" style="left:499.00px;top:613.00px;width:36.00px;height:35.00px;border:1px solid #ccc;border-radius:4px;background:#fff;"></div>
<div class="r" style="left:541.00px;top:613.00px;width:36.00px;height:35.00px;border:1px solid #ccc;border-radius:4px;background:#fff;"></div>
<div class="r" style="left:583.00px;top:613.00px;width:36.00px;height:35.00px;border:1px solid #ccc;border-radius:4px;background:#fff;"></div>
<svg class="i" style="left:467.80px;top:627.06px;" width="14" height="9" viewBox="0 0 14 9" fill="#0b1a2e"><path d="M0.6 4.5C2.6 1.5 4.8 0.4 7 0.4C9.2 0.4 11.4 1.5 13.4 4.5C11.4 7.5 9.2 8.6 7 8.6C4.8 8.6 2.6 7.5 0.6 4.5Z" fill="none" stroke="#0b1a2e" stroke-width="1.2"/><circle cx="7" cy="4.4" r="3.2"/><circle cx="5.9" cy="3.2" r="0.9" fill="#fff" opacity="0.6"/></svg>
<svg class="i" style="left:511.00px;top:623.16px;" width="12.5" height="15" viewBox="0 0 12.5 15" fill="#0b1a2e"><path d="M0.8 0.8H8L11.7 4.5V14.2H0.8Z" fill="none" stroke="#0b1a2e" stroke-width="1.15" stroke-linejoin="round"/><path d="M7.7 0.8V4.8H11.7" fill="none" stroke="#0b1a2e" stroke-width="1"/></svg>
<svg class="i" style="left:552.50px;top:625.16px;" width="13.4" height="12.6" viewBox="0 0 13.4 12.6" fill="#2c5d98"><path d="M3.4 9.0L10.0 2.4" stroke="#2c5d98" stroke-width="3.9"/><path d="M10.9 1.5L11.4 1.0C11.9 0.5 12.6 0.5 13.0 1.0C13.4 1.4 13.4 2.1 12.9 2.6L12.4 3.1Z" stroke="#2c5d98" stroke-width="1.2"/><path d="M0.2 12.4L1.0 8.2L4.4 11.6Z"/><circle cx="1.8" cy="10.6" r="0.7" fill="#fff"/></svg>
<svg class="i" style="left:595.00px;top:624.56px;" width="11" height="12" viewBox="0 0 14 15" fill="#e9a6aa"><path d="M4.3 2.5V1.2C4.3 0.6 4.8 0.2 5.4 0.2H8.6C9.2 0.2 9.7 0.6 9.7 1.2V2.5" fill="none" stroke="#e9a6aa" stroke-width="1.2"/><rect x="0" y="2.3" width="14" height="1.7"/><path d="M1.5 4.5H12.5L11.8 14C11.7 14.6 11.3 15 10.7 15H3.3C2.7 15 2.3 14.6 2.2 14Z"/><rect x="4.3" y="6" width="1" height="7.3" fill="#fff" opacity=".7"/><rect x="6.5" y="6" width="1" height="7.3" fill="#fff" opacity=".7"/><rect x="8.7" y="6" width="1" height="7.3" fill="#fff" opacity=".7"/></svg>
<div class="t" style="left:385.10px;width:600px;text-align:center;top:622.10px;font-size:15.6px;color:#333;font-weight:normal;">3</div>
<div class="t" style="left:497.85px;width:600px;text-align:center;top:622.10px;font-size:15.6px;color:#333;font-weight:normal;">191343110</div>
<div class="t" style="left:610.40px;width:600px;text-align:center;top:622.10px;font-size:15.6px;color:#333;font-weight:normal;">0</div>
<svg class="i" style="left:1018.20px;top:624.86px;" width="11" height="11" viewBox="0 0 11 11" fill="#a9561d"><path d="M2 2L9 9M9 2L2 9" fill="none" stroke="#a9561d" stroke-width="3.6" stroke-linecap="round"/></svg>
<div class="t" style="left:844.75px;width:600px;text-align:center;top:622.10px;font-size:15.6px;color:#333;font-weight:normal;">de</div>
<div class="t" style="left:1119.50px;width:600px;text-align:center;top:622.10px;font-size:15.6px;color:#333;font-weight:normal;">07.04.2025 15:59:15</div>
<div class="t" style="left:1539.50px;width:600px;text-align:center;top:622.10px;font-size:15.6px;color:#333;font-weight:normal;">07.04.2025 15:59:15</div>
<div class="r" style="left:399.00px;top:658.00px;width:1698.00px;height:1.00px;background:#ddd;"></div>
<div class="r" style="left:410.00px;top:675.00px;width:21.00px;height:21.00px;border:2px solid #555;border-radius:3.5px;background:#fff;"></div>
<div class="r" style="left:457.00px;top:668.00px;width:36.00px;height:36.00px;border:1px solid #ccc;border-radius:4px;background:#fff;"></div>
<div class="r" style="left:499.00px;top:668.00px;width:36.00px;height:36.00px;border:1px solid #ccc;border-radius:4px;background:#fff;"></div>
<div class="r" style="left:541.00px;top:668.00px;width:36.00px;height:36.00px;border:1px solid #ccc;border-radius:4px;background:#fff;"></div>
<div class="r" style="left:583.00px;top:668.00px;width:36.00px;height:36.00px;border:1px solid #ccc;border-radius:4px;background:#fff;"></div>
<svg class="i" style="left:467.80px;top:682.74px;" width="14" height="9" viewBox="0 0 14 9" fill="#0b1a2e"><path d="M0.6 4.5C2.6 1.5 4.8 0.4 7 0.4C9.2 0.4 11.4 1.5 13.4 4.5C11.4 7.5 9.2 8.6 7 8.6C4.8 8.6 2.6 7.5 0.6 4.5Z" fill="none" stroke="#0b1a2e" stroke-width="1.2"/><circle cx="7" cy="4.4" r="3.2"/><circle cx="5.9" cy="3.2" r="0.9" fill="#fff" opacity="0.6"/></svg>
<svg class="i" style="left:511.00px;top:678.84px;" width="12.5" height="15" viewBox="0 0 12.5 15" fill="#0b1a2e"><path d="M0.8 0.8H8L11.7 4.5V14.2H0.8Z" fill="none" stroke="#0b1a2e" stroke-width="1.15" stroke-linejoin="round"/><path d="M7.7 0.8V4.8H11.7" fill="none" stroke="#0b1a2e" stroke-width="1"/></svg>
<svg class="i" style="left:552.50px;top:680.84px;" width="13.4" height="12.6" viewBox="0 0 13.4 12.6" fill="#2c5d98"><path d="M3.4 9.0L10.0 2.4" stroke="#2c5d98" stroke-width="3.9"/><path d="M10.9 1.5L11.4 1.0C11.9 0.5 12.6 0.5 13.0 1.0C13.4 1.4 13.4 2.1 12.9 2.6L12.4 3.1Z" stroke="#2c5d98" stroke-width="1.2"/><path d="M0.2 12.4L1.0 8.2L4.4 11.6Z"/><circle cx="1.8" cy="10.6" r="0.7" fill="#fff"/></svg>
<svg class="i" style="left:595.00px;top:680.24px;" width="11" height="12" viewBox="0 0 14 15" fill="#e9a6aa"><path d="M4.3 2.5V1.2C4.3 0.6 4.8 0.2 5.4 0.2H8.6C9.2 0.2 9.7 0.6 9.7 1.2V2.5" fill="none" stroke="#e9a6aa" stroke-width="1.2"/><rect x="0" y="2.3" width="14" height="1.7"/><path d="M1.5 4.5H12.5L11.8 14C11.7 14.6 11.3 15 10.7 15H3.3C2.7 15 2.3 14.6 2.2 14Z"/><rect x="4.3" y="6" width="1" height="7.3" fill="#fff" opacity=".7"/><rect x="6.5" y="6" width="1" height="7.3" fill="#fff" opacity=".7"/><rect x="8.7" y="6" width="1" height="7.3" fill="#fff" opacity=".7"/></svg>
<div class="t" style="left:385.10px;width:600px;text-align:center;top:678.10px;font-size:15.6px;color:#333;font-weight:normal;">4</div>
<div class="t" style="left:497.85px;width:600px;text-align:center;top:678.10px;font-size:15.6px;color:#333;font-weight:normal;">688862672</div>
<div class="t" style="left:610.40px;width:600px;text-align:center;top:678.10px;font-size:15.6px;color:#333;font-weight:normal;">3</div>
<svg class="i" style="left:1018.20px;top:680.54px;" width="11" height="11" viewBox="0 0 11 11" fill="#a9561d"><path d="M2 2L9 9M9 2L2 9" fill="none" stroke="#a9561d" stroke-width="3.6" stroke-linecap="round"/></svg>
<div class="t" style="left:844.75px;width:600px;text-align:center;top:678.10px;font-size:15.6px;color:#333;font-weight:normal;">de</div>
<div class="t" style="left:1119.50px;width:600px;text-align:center;top:678.10px;font-size:15.6px;color:#333;font-weight:normal;">07.04.2025 18:25:05</div>
<div class="t" style="left:1539.50px;width:600px;text-align:center;top:678.10px;font-size:15.6px;color:#333;font-weight:normal;">07.04.2025 18:25:52</div>
<div class="r" style="left:399.00px;top:713.00px;width:1698.00px;height:1.00px;background:#ddd;"></div>
<div class="r" style="left:410.00px;top:731.00px;width:21.00px;height:21.00px;border:2px solid #555;border-radius:3.5px;background:#fff;"></div>
<div class="r" style="left:457.00px;top:724.00px;width:36.00px;height:35.00px;border:1px solid #ccc;border-radius:4px;background:#fff;"></div>
<div class="r" style="left:499.00px;top:724.00px;width:36.00px;height:35.00px;border:1px solid #ccc;border-radius:4px;background:#fff;"></div>
<div class="r" style="left:541.00px;top:724.00px;width:36.00px;height:35.00px;border:1px solid #ccc;border-radius:4px;background:#fff;"></div>
<div class="r" style="left:583.00px;top:724.00px;width:36.00px;height:35.00px;border:1px solid #ccc;border-radius:4px;background:#fff;"></div>
<svg class="i" style="left:467.80px;top:738.42px;" width="14" height="9" viewBox="0 0 14 9" fill="#0b1a2e"><path d="M0.6 4.5C2.6 1.5 4.8 0.4 7 0.4C9.2 0.4 11.4 1.5 13.4 4.5C11.4 7.5 9.2 8.6 7 8.6C4.8 8.6 2.6 7.5 0.6 4.5Z" fill="none" stroke="#0b1a2e" stroke-width="1.2"/><circle cx="7" cy="4.4" r="3.2"/><circle cx="5.9" cy="3.2" r="0.9" fill="#fff" opacity="0.6"/></svg>
<svg class="i" style="left:511.00px;top:734.52px;" width="12.5" height="15" viewBox="0 0 12.5 15" fill="#0b1a2e"><path d="M0.8 0.8H8L11.7 4.5V14.2H0.8Z" fill="none" stroke="#0b1a2e" stroke-width="1.15" stroke-linejoin="round"/><path d="M7.7 0.8V4.8H11.7" fill="none" stroke="#0b1a2e" stroke-width="1"/></svg>
<svg class="i" style="left:552.50px;top:736.52px;" width="13.4" height="12.6" viewBox="0 0 13.4 12.6" fill="#2c5d98"><path d="M3.4 9.0L10.0 2.4" stroke="#2c5d98" stroke-width="3.9"/><path d="M10.9 1.5L11.4 1.0C11.9 0.5 12.6 0.5 13.0 1.0C13.4 1.4 13.4 2.1 12.9 2.6L12.4 3.1Z" stroke="#2c5d98" stroke-width="1.2"/><path d="M0.2 12.4L1.0 8.2L4.4 11.6Z"/><circle cx="1.8" cy="10.6" r="0.7" fill="#fff"/></svg>
<svg class="i" style="left:595.00px;top:735.92px;" width="11" height="12" viewBox="0 0 14 15" fill="#e9a6aa"><path d="M4.3 2.5V1.2C4.3 0.6 4.8 0.2 5.4 0.2H8.6C9.2 0.2 9.7 0.6 9.7 1.2V2.5" fill="none" stroke="#e9a6aa" stroke-width="1.2"/><rect x="0" y="2.3" width="14" height="1.7"/><path d="M1.5 4.5H12.5L11.8 14C11.7 14.6 11.3 15 10.7 15H3.3C2.7 15 2.3 14.6 2.2 14Z"/><rect x="4.3" y="6" width="1" height="7.3" fill="#fff" opacity=".7"/><rect x="6.5" y="6" width="1" height="7.3" fill="#fff" opacity=".7"/><rect x="8.7" y="6" width="1" height="7.3" fill="#fff" opacity=".7"/></svg>
<div class="t" style="left:385.10px;width:600px;text-align:center;top:734.10px;font-size:15.6px;color:#333;font-weight:normal;">5</div>
<div class="t" style="left:497.85px;width:600px;text-align:center;top:734.10px;font-size:15.6px;color:#333;font-weight:normal;">1767917889</div>
<div class="t" style="left:610.40px;width:600px;text-align:center;top:734.10px;font-size:15.6px;color:#333;font-weight:normal;">-1</div>
<svg class="i" style="left:1018.20px;top:736.22px;" width="11" height="11" viewBox="0 0 11 11" fill="#a9561d"><path d="M2 2L9 9M9 2L2 9" fill="none" stroke="#a9561d" stroke-width="3.6" stroke-linecap="round"/></svg>
<div class="t" style="left:844.75px;width:600px;text-align:center;top:734.10px;font-size:15.6px;color:#333;font-weight:normal;">de</div>
<div class="t" style="left:1119.50px;width:600px;text-align:center;top:734.10px;font-size:15.6px;color:#333;font-weight:normal;">08.04.2025 12:16:22</div>
<div class="t" style="left:1539.50px;width:600px;text-align:center;top:734.10px;font-size:15.6px;color:#333;font-weight:normal;">08.04.2025 12:16:31</div>
<div class="r" style="left:399.00px;top:769.00px;width:1698.00px;height:1.00px;background:#ddd;"></div>
<div class="r" style="left:410.00px;top:787.00px;width:21.00px;height:21.00px;border:2px solid #555;border-radius:3.5px;background:#fff;"></div>
<div class="r" style="left:457.00px;top:780.00px;width:36.00px;height:35.00px;border:1px solid #ccc;border-radius:4px;background:#fff;"></div>
<div class="r" style="left:499.00px;top:780.00px;width:36.00px;height:35.00px;border:1px solid #ccc;border-radius:4px;background:#fff;"></div>
<div class="r" style="left:541.00px;top:780.00px;width:36.00px;height:35.00px;border:1px solid #ccc;border-radius:4px;background:#fff;"></div>
<div class="r" style="left:583.00px;top:780.00px;width:36.00px;height:35.00px;border:1px solid #ccc;border-radius:4px;background:#fff;"></div>
<svg class="i" style="left:467.80px;top:794.10px;" width="14" height="9" viewBox="0 0 14 9" fill="#0b1a2e"><path d="M0.6 4.5C2.6 1.5 4.8 0.4 7 0.4C9.2 0.4 11.4 1.5 13.4 4.5C11.4 7.5 9.2 8.6 7 8.6C4.8 8.6 2.6 7.5 0.6 4.5Z" fill="none" stroke="#0b1a2e" stroke-width="1.2"/><circle cx="7" cy="4.4" r="3.2"/><circle cx="5.9" cy="3.2" r="0.9" fill="#fff" opacity="0.6"/></svg>
<svg class="i" style="left:511.00px;top:790.20px;" width="12.5" height="15" viewBox="0 0 12.5 15" fill="#0b1a2e"><path d="M0.8 0.8H8L11.7 4.5V14.2H0.8Z" fill="none" stroke="#0b1a2e" stroke-width="1.15" stroke-linejoin="round"/><path d="M7.7 0.8V4.8H11.7" fill="none" stroke="#0b1a2e" stroke-width="1"/></svg>
<svg class="i" style="left:552.50px;top:792.20px;" width="13.4" height="12.6" viewBox="0 0 13.4 12.6" fill="#2c5d98"><path d="M3.4 9.0L10.0 2.4" stroke="#2c5d98" stroke-width="3.9"/><path d="M10.9 1.5L11.4 1.0C11.9 0.5 12.6 0.5 13.0 1.0C13.4 1.4 13.4 2.1 12.9 2.6L12.4 3.1Z" stroke="#2c5d98" stroke-width="1.2"/><path d="M0.2 12.4L1.0 8.2L4.4 11.6Z"/><circle cx="1.8" cy="10.6" r="0.7" fill="#fff"/></svg>
<svg class="i" style="left:595.00px;top:791.60px;" width="11" height="12" viewBox="0 0 14 15" fill="#e9a6aa"><path d="M4.3 2.5V1.2C4.3 0.6 4.8 0.2 5.4 0.2H8.6C9.2 0.2 9.7 0.6 9.7 1.2V2.5" fill="none" stroke="#e9a6aa" stroke-width="1.2"/><rect x="0" y="2.3" width="14" height="1.7"/><path d="M1.5 4.5H12.5L11.8 14C11.7 14.6 11.3 15 10.7 15H3.3C2.7 15 2.3 14.6 2.2 14Z"/><rect x="4.3" y="6" width="1" height="7.3" fill="#fff" opacity=".7"/><rect x="6.5" y="6" width="1" height="7.3" fill="#fff" opacity=".7"/><rect x="8.7" y="6" width="1" height="7.3" fill="#fff" opacity=".7"/></svg>
<div class="t" style="left:385.10px;width:600px;text-align:center;top:789.10px;font-size:15.6px;color:#333;font-weight:normal;">38</div>
<div class="t" style="left:497.85px;width:600px;text-align:center;top:789.10px;font-size:15.6px;color:#333;font-weight:normal;">1206838525</div>
<div class="t" style="left:610.40px;width:600px;text-align:center;top:789.10px;font-size:15.6px;color:#333;font-weight:normal;">5</div>
<svg class="i" style="left:1016.70px;top:790.00px;" width="14" height="12.5" viewBox="0 0 14 12.5" fill="#1f4e86"><path d="M1.3 6.5L5 10.2L12.7 2" fill="none" stroke="#1f4e86" stroke-width="3.2"/></svg>
<div class="t" style="left:844.75px;width:600px;text-align:center;top:789.10px;font-size:15.6px;color:#333;font-weight:normal;">de</div>
<div class="t" style="left:1119.50px;width:600px;text-align:center;top:789.10px;font-size:15.6px;color:#333;font-weight:normal;">10.04.2025 09:50:13</div>
<div class="t" style="left:1539.50px;width:600px;text-align:center;top:789.10px;font-size:15.6px;color:#333;font-weight:normal;">10.04.2025 09:57:30</div>
<div class="r" style="left:399.00px;top:825.00px;width:1698.00px;height:1.00px;background:#ddd;"></div>
<div class="r" style="left:410.00px;top:842.00px;width:21.00px;height:21.00px;border:2px solid #555;border-radius:3.5px;background:#fff;"></div>
<div class="r" style="left:457.00px;top:835.00px;width:36.00px;height:36.00px;border:1px solid #ccc;border-radius:4px;background:#fff;"></div>
<div class="r" style="left:499.00px;top:835.00px;width:36.00px;height:36.00px;border:1px solid #ccc;border-radius:4px;background:#fff;"></div>
<div class="r" style="left:541.00px;top:835.00px;width:36.00px;height:36.00px;border:1px solid #ccc;border-radius:4px;background:#fff;"></div>
<div class="r" style="left:583.00px;top:835.00px;width:36.00px;height:36.00px;border:1px solid #ccc;border-radius:4px;background:#fff;"></div>
<svg class="i" style="left:467.80px;top:849.78px;" width="14" height="9" viewBox="0 0 14 9" fill="#0b1a2e"><path d="M0.6 4.5C2.6 1.5 4.8 0.4 7 0.4C9.2 0.4 11.4 1.5 13.4 4.5C11.4 7.5 9.2 8.6 7 8.6C4.8 8.6 2.6 7.5 0.6 4.5Z" fill="none" stroke="#0b1a2e" stroke-width="1.2"/><circle cx="7" cy="4.4" r="3.2"/><circle cx="5.9" cy="3.2" r="0.9" fill="#fff" opacity="0.6"/></svg>
<svg class="i" style="left:511.00px;top:845.88px;" width="12.5" height="15" viewBox="0 0 12.5 15" fill="#0b1a2e"><path d="M0.8 0.8H8L11.7 4.5V14.2H0.8Z" fill="none" stroke="#0b1a2e" stroke-width="1.15" stroke-linejoin="round"/><path d="M7.7 0.8V4.8H11.7" fill="none" stroke="#0b1a2e" stroke-width="1"/></svg>
<svg class="i" style="left:552.50px;top:847.88px;" width="13.4" height="12.6" viewBox="0 0 13.4 12.6" fill="#2c5d98"><path d="M3.4 9.0L10.0 2.4" stroke="#2c5d98" stroke-width="3.9"/><path d="M10.9 1.5L11.4 1.0C11.9 0.5 12.6 0.5 13.0 1.0C13.4 1.4 13.4 2.1 12.9 2.6L12.4 3.1Z" stroke="#2c5d98" stroke-width="1.2"/><path d="M0.2 12.4L1.0 8.2L4.4 11.6Z"/><circle cx="1.8" cy="10.6" r="0.7" fill="#fff"/></svg>
<svg class="i" style="left:595.00px;top:847.28px;" width="11" height="12" viewBox="0 0 14 15" fill="#e9a6aa"><path d="M4.3 2.5V1.2C4.3 0.6 4.8 0.2 5.4 0.2H8.6C9.2 0.2 9.7 0.6 9.7 1.2V2.5" fill="none" stroke="#e9a6aa" stroke-width="1.2"/><rect x="0" y="2.3" width="14" height="1.7"/><path d="M1.5 4.5H12.5L11.8 14C11.7 14.6 11.3 15 10.7 15H3.3C2.7 15 2.3 14.6 2.2 14Z"/><rect x="4.3" y="6" width="1" height="7.3" fill="#fff" opacity=".7"/><rect x="6.5" y="6" width="1" height="7.3" fill="#fff" opacity=".7"/><rect x="8.7" y="6" width="1" height="7.3" fill="#fff" opacity=".7"/></svg>
<div class="t" style="left:385.10px;width:600px;text-align:center;top:845.10px;font-size:15.6px;color:#333;font-weight:normal;">39</div>
<div class="t" style="left:497.85px;width:600px;text-align:center;top:845.10px;font-size:15.6px;color:#333;font-weight:normal;">579656462</div>
<div class="t" style="left:610.40px;width:600px;text-align:center;top:845.10px;font-size:15.6px;color:#333;font-weight:normal;">3</div>
<svg class="i" style="left:1018.20px;top:847.58px;" width="11" height="11" viewBox="0 0 11 11" fill="#a9561d"><path d="M2 2L9 9M9 2L2 9" fill="none" stroke="#a9561d" stroke-width="3.6" stroke-linecap="round"/></svg>
<div class="t" style="left:844.75px;width:600px;text-align:center;top:845.10px;font-size:15.6px;color:#333;font-weight:normal;">de</div>
<div class="t" style="left:1119.50px;width:600px;text-align:center;top:845.10px;font-size:15.6px;color:#333;font-weight:normal;">10.04.2025 13:29:18</div>
<div class="t" style="left:1539.50px;width:600px;text-align:center;top:845.10px;font-size:15.6px;color:#333;font-weight:normal;">10.04.2025 13:30:04</div>
<div class="r" style="left:399.00px;top:880.00px;width:1698.00px;height:1.00px;background:#ddd;"></div>
<div class="r" style="left:410.00px;top:898.00px;width:21.00px;height:21.00px;border:2px solid #555;border-radius:3.5px;background:#fff;"></div>
<div class="r" style="left:457.00px;top:891.00px;width:36.00px;height:35.00px;border:1px solid #ccc;border-radius:4px;background:#fff;"></div>
<div class="r" style="left:499.00px;top:891.00px;width:36.00px;height:35.00px;border:1px solid #ccc;border-radius:4px;background:#fff;"></div>
<div class="r" style="left:541.00px;top:891.00px;width:36.00px;height:35.00px;border:1px solid #ccc;border-radius:4px;background:#fff;"></div>
<div class="r" style="left:583.00px;top:891.00px;width:36.00px;height:35.00px;border:1px solid #ccc;border-radius:4px;background:#fff;"></div>
<svg class="i" style="left:467.80px;top:905.46px;" width="14" height="9" viewBox="0 0 14 9" fill="#0b1a2e"><path d="M0.6 4.5C2.6 1.5 4.8 0.4 7 0.4C9.2 0.4 11.4 1.5 13.4 4.5C11.4 7.5 9.2 8.6 7 8.6C4.8 8.6 2.6 7.5 0.6 4.5Z" fill="none" stroke="#0b1a2e" stroke-width="1.2"/><circle cx="7" cy="4.4" r="3.2"/><circle cx="5.9" cy="3.2" r="0.9" fill="#fff" opacity="0.6"/></svg>
<svg class="i" style="left:511.00px;top:901.56px;" width="12.5" height="15" viewBox="0 0 12.5 15" fill="#0b1a2e"><path d="M0.8 0.8H8L11.7 4.5V14.2H0.8Z" fill="none" stroke="#0b1a2e" stroke-width="1.15" stroke-linejoin="round"/><path d="M7.7 0.8V4.8H11.7" fill="none" stroke="#0b1a2e" stroke-width="1"/></svg>
<svg class="i" style="left:552.50px;top:903.56px;" width="13.4" height="12.6" viewBox="0 0 13.4 12.6" fill="#2c5d98"><path d="M3.4 9.0L10.0 2.4" stroke="#2c5d98" stroke-width="3.9"/><path d="M10.9 1.5L11.4 1.0C11.9 0.5 12.6 0.5 13.0 1.0C13.4 1.4 13.4 2.1 12.9 2.6L12.4 3.1Z" stroke="#2c5d98" stroke-width="1.2"/><path d="M0.2 12.4L1.0 8.2L4.4 11.6Z"/><circle cx="1.8" cy="10.6" r="0.7" fill="#fff"/></svg>
<svg class="i" style="left:595.00px;top:902.96px;" width="11" height="12" viewBox="0 0 14 15" fill="#e9a6aa"><path d="M4.3 2.5V1.2C4.3 0.6 4.8 0.2 5.4 0.2H8.6C9.2 0.2 9.7 0.6 9.7 1.2V2.5" fill="none" stroke="#e9a6aa" stroke-width="1.2"/><rect x="0" y="2.3" width="14" height="1.7"/><path d="M1.5 4.5H12.5L11.8 14C11.7 14.6 11.3 15 10.7 15H3.3C2.7 15 2.3 14.6 2.2 14Z"/><rect x="4.3" y="6" width="1" height="7.3" fill="#fff" opacity=".7"/><rect x="6.5" y="6" width="1" height="7.3" fill="#fff" opacity=".7"/><rect x="8.7" y="6" width="1" height="7.3" fill="#fff" opacity=".7"/></svg>
<div class="t" style="left:385.10px;width:600px;text-align:center;top:901.10px;font-size:15.6px;color:#333;font-weight:normal;">72</div>
<div class="t" style="left:497.85px;width:600px;text-align:center;top:901.10px;font-size:15.6px;color:#333;font-weight:normal;">17632870</div>
<div class="t" style="left:610.40px;width:600px;text-align:center;top:901.10px;font-size:15.6px;color:#333;font-weight:normal;">0</div>
<svg class="i" style="left:1018.20px;top:903.26px;" width="11" height="11" viewBox="0 0 11 11" fill="#a9561d"><path d="M2 2L9 9M9 2L2 9" fill="none" stroke="#a9561d" stroke-width="3.6" stroke-linecap="round"/></svg>
<div class="t" style="left:844.75px;width:600px;text-align:center;top:901.10px;font-size:15.6px;color:#333;font-weight:normal;">de</div>
<div class="t" style="left:1119.50px;width:600px;text-align:center;top:901.10px;font-size:15.6px;color:#333;font-weight:normal;">14.04.2025 08:03:17</div>
<div class="t" style="left:1539.50px;width:600px;text-align:center;top:901.10px;font-size:15.6px;color:#333;font-weight:normal;">14.04.2025 08:03:17</div>
<div class="r" style="left:399.00px;top:936.00px;width:1698.00px;height:1.00px;background:#ddd;"></div>
<div class="r" style="left:410.00px;top:954.00px;width:21.00px;height:21.00px;border:2px solid #555;border-radius:3.5px;background:#fff;"></div>
<div class="r" style="left:457.00px;top:947.00px;width:36.00px;height:35.00px;border:1px solid #ccc;border-radius:4px;background:#fff;"></div>
<div class="r" style="left:499.00px;top:947.00px;width:36.00px;height:35.00px;border:1px solid #ccc;border-radius:4px;background:#fff;"></div>
<div class="r" style="left:541.00px;top:947.00px;width:36.00px;height:35.00px;border:1px solid #ccc;border-radius:4px;background:#fff;"></div>
<div class="r" style="left:583.00px;top:947.00px;width:36.00px;height:35.00px;border:1px solid #ccc;border-radius:4px;background:#fff;"></div>
<svg class="i" style="left:467.80px;top:961.14px;" width="14" height="9" viewBox="0 0 14 9" fill="#0b1a2e"><path d="M0.6 4.5C2.6 1.5 4.8 0.4 7 0.4C9.2 0.4 11.4 1.5 13.4 4.5C11.4 7.5 9.2 8.6 7 8.6C4.8 8.6 2.6 7.5 0.6 4.5Z" fill="none" stroke="#0b1a2e" stroke-width="1.2"/><circle cx="7" cy="4.4" r="3.2"/><circle cx="5.9" cy="3.2" r="0.9" fill="#fff" opacity="0.6"/></svg>
<svg class="i" style="left:511.00px;top:957.24px;" width="12.5" height="15" viewBox="0 0 12.5 15" fill="#0b1a2e"><path d="M0.8 0.8H8L11.7 4.5V14.2H0.8Z" fill="none" stroke="#0b1a2e" stroke-width="1.15" stroke-linejoin="round"/><path d="M7.7 0.8V4.8H11.7" fill="none" stroke="#0b1a2e" stroke-width="1"/></svg>
<svg class="i" style="left:552.50px;top:959.24px;" width="13.4" height="12.6" viewBox="0 0 13.4 12.6" fill="#2c5d98"><path d="M3.4 9.0L10.0 2.4" stroke="#2c5d98" stroke-width="3.9"/><path d="M10.9 1.5L11.4 1.0C11.9 0.5 12.6 0.5 13.0 1.0C13.4 1.4 13.4 2.1 12.9 2.6L12.4 3.1Z" stroke="#2c5d98" stroke-width="1.2"/><path d="M0.2 12.4L1.0 8.2L4.4 11.6Z"/><circle cx="1.8" cy="10.6" r="0.7" fill="#fff"/></svg>
<svg class="i" style="left:595.00px;top:958.64px;" width="11" height="12" viewBox="0 0 14 15" fill="#e9a6aa"><path d="M4.3 2.5V1.2C4.3 0.6 4.8 0.2 5.4 0.2H8.6C9.2 0.2 9.7 0.6 9.7 1.2V2.5" fill="none" stroke="#e9a6aa" stroke-width="1.2"/><rect x="0" y="2.3" width="14" height="1.7"/><path d="M1.5 4.5H12.5L11.8 14C11.7 14.6 11.3 15 10.7 15H3.3C2.7 15 2.3 14.6 2.2 14Z"/><rect x="4.3" y="6" width="1" height="7.3" fill="#fff" opacity=".7"/><rect x="6.5" y="6" width="1" height="7.3" fill="#fff" opacity=".7"/><rect x="8.7" y="6" width="1" height="7.3" fill="#fff" opacity=".7"/></svg>
<div class="t" style="left:385.10px;width:600px;text-align:center;top:956.10px;font-size:15.6px;color:#333;font-weight:normal;">73</div>
<div class="t" style="left:497.85px;width:600px;text-align:center;top:956.10px;font-size:15.6px;color:#333;font-weight:normal;">2024471910</div>
<div class="t" style="left:610.40px;width:600px;text-align:center;top:956.10px;font-size:15.6px;color:#333;font-weight:normal;">3</div>
<svg class="i" style="left:1018.20px;top:958.94px;" width="11" height="11" viewBox="0 0 11 11" fill="#a9561d"><path d="M2 2L9 9M9 2L2 9" fill="none" stroke="#a9561d" stroke-width="3.6" stroke-linecap="round"/></svg>
<div class="t" style="left:844.75px;width:600px;text-align:center;top:956.10px;font-size:15.6px;color:#333;font-weight:normal;">de</div>
<div class="t" style="left:1119.50px;width:600px;text-align:center;top:956.10px;font-size:15.6px;color:#333;font-weight:normal;">14.04.2025 08:08:54</div>
<div class="t" style="left:1539.50px;width:600px;text-align:center;top:956.10px;font-size:15.6px;color:#333;font-weight:normal;">14.04.2025 08:10:10</div>
<div class="r" style="left:399.00px;top:992.00px;width:1698.00px;height:1.00px;background:#ddd;"></div>
<div class="r" style="left:410.00px;top:1009.00px;width:21.00px;height:22.00px;border:2px solid #555;border-radius:3.5px;background:#fff;"></div>
<div class="r" style="left:457.00px;top:1002.00px;width:36.00px;height:36.00px;border:1px solid #ccc;border-radius:4px;background:#fff;"></div>
<div class="r" style="left:499.00px;top:1002.00px;width:36.00px;height:36.00px;border:1px solid #ccc;border-radius:4px;background:#fff;"></div>
<div class="r" style="left:541.00px;top:1002.00px;width:36.00px;height:36.00px;border:1px solid #ccc;border-radius:4px;background:#fff;"></div>
<div class="r" style="left:583.00px;top:1002.00px;width:36.00px;height:36.00px;border:1px solid #ccc;border-radius:4px;background:#fff;"></div>
<svg class="i" style="left:467.80px;top:1016.82px;" width="14" height="9" viewBox="0 0 14 9" fill="#0b1a2e"><path d="M0.6 4.5C2.6 1.5 4.8 0.4 7 0.4C9.2 0.4 11.4 1.5 13.4 4.5C11.4 7.5 9.2 8.6 7 8.6C4.8 8.6 2.6 7.5 0.6 4.5Z" fill="none" stroke="#0b1a2e" stroke-width="1.2"/><circle cx="7" cy="4.4" r="3.2"/><circle cx="5.9" cy="3.2" r="0.9" fill="#fff" opacity="0.6"/></svg>
<svg class="i" style="left:511.00px;top:1012.92px;" width="12.5" height="15" viewBox="0 0 12.5 15" fill="#0b1a2e"><path d="M0.8 0.8H8L11.7 4.5V14.2H0.8Z" fill="none" stroke="#0b1a2e" stroke-width="1.15" stroke-linejoin="round"/><path d="M7.7 0.8V4.8H11.7" fill="none" stroke="#0b1a2e" stroke-width="1"/></svg>
<svg class="i" style="left:552.50px;top:1014.92px;" width="13.4" height="12.6" viewBox="0 0 13.4 12.6" fill="#2c5d98"><path d="M3.4 9.0L10.0 2.4" stroke="#2c5d98" stroke-width="3.9"/><path d="M10.9 1.5L11.4 1.0C11.9 0.5 12.6 0.5 13.0 1.0C13.4 1.4 13.4 2.1 12.9 2.6L12.4 3.1Z" stroke="#2c5d98" stroke-width="1.2"/><path d="M0.2 12.4L1.0 8.2L4.4 11.6Z"/><circle cx="1.8" cy="10.6" r="0.7" fill="#fff"/></svg>
<svg class="i" style="left:595.00px;top:1014.32px;" width="11" height="12" viewBox="0 0 14 15" fill="#e9a6aa"><path d="M4.3 2.5V1.2C4.3 0.6 4.8 0.2 5.4 0.2H8.6C9.2 0.2 9.7 0.6 9.7 1.2V2.5" fill="none" stroke="#e9a6aa" stroke-width="1.2"/><rect x="0" y="2.3" width="14" height="1.7"/><path d="M1.5 4.5H12.5L11.8 14C11.7 14.6 11.3 15 10.7 15H3.3C2.7 15 2.3 14.6 2.2 14Z"/><rect x="4.3" y="6" width="1" height="7.3" fill="#fff" opacity=".7"/><rect x="6.5" y="6" width="1" height="7.3" fill="#fff" opacity=".7"/><rect x="8.7" y="6" width="1" height="7.3" fill="#fff" opacity=".7"/></svg>
<div class="t" style="left:385.10px;width:600px;text-align:center;top:1012.10px;font-size:15.6px;color:#333;font-weight:normal;">74</div>
<div class="t" style="left:497.85px;width:600px;text-align:center;top:1012.10px;font-size:15.6px;color:#333;font-weight:normal;">1923022571</div>
<div class="t" style="left:610.40px;width:600px;text-align:center;top:1012.10px;font-size:15.6px;color:#333;font-weight:normal;">1</div>
<svg class="i" style="left:1018.20px;top:1014.62px;" width="11" height="11" viewBox="0 0 11 11" fill="#a9561d"><path d="M2 2L9 9M9 2L2 9" fill="none" stroke="#a9561d" stroke-width="3.6" stroke-linecap="round"/></svg>
<div class="t" style="left:844.75px;width:600px;text-align:center;top:1012.10px;font-size:15.6px;color:#333;font-weight:normal;">de</div>
<div class="t" style="left:1119.50px;width:600px;text-align:center;top:1012.10px;font-size:15.6px;color:#333;font-weight:normal;">14.04.2025 08:09:58</div>
<div class="t" style="left:1539.50px;width:600px;text-align:center;top:1012.10px;font-size:15.6px;color:#333;font-weight:normal;">14.04.2025 08:10:29</div>
<div class="r" style="left:399.00px;top:1073.00px;width:250.00px;height:40.00px;border:1px solid #ccc;border-radius:4px;background:#fff;"></div>
<div class="t" style="left:414.97px;top:1085.10px;font-size:16.8px;color:#0c1a2d;font-weight:normal;">Ausgewählte Antwort(en) ...</div>
<svg class="i" style="left:625.50px;top:1093.00px;" width="8" height="5" viewBox="0 0 8 5" fill="currentColor"><path d="M0 5H8L4 0Z" fill="#0c1a2d"/></svg>
<div class="r" style="left:653.00px;top:1073.00px;width:46.00px;height:40.00px;border:1px solid #ccc;border-radius:4px;background:#fff;"></div>
<svg class="i" style="left:668.00px;top:1084.60px;" width="16" height="14" viewBox="0 0 16 14" fill="currentColor"><rect x="0.75" y="0.75" width="14.5" height="12.5" fill="none" stroke="#0c1a2d" stroke-width="1.5"/><rect x="0.75" y="0.75" width="14.5" height="2" fill="#0c1a2d"/><rect x="7.25" y="1" width="1.5" height="12" fill="#0c1a2d"/></svg>
<div class="r" style="left:1250.00px;top:1122.00px;width:45.00px;height:40.00px;border:1.2px solid #d9d9d9;border-radius:5px;background:#fff;"></div>
<div class="t" style="left:1242.85px;width:60px;text-align:center;top:1132.10px;font-size:20.2px;color:#2b78c1;font-weight:normal;">«</div>
<div class="r" style="left:1299.00px;top:1122.00px;width:40.00px;height:40.00px;border:1.2px solid #d9d9d9;border-radius:5px;background:#fff;"></div>
<div class="t" style="left:1289.00px;width:60px;text-align:center;top:1132.10px;font-size:20.2px;color:#2b78c1;font-weight:normal;">‹</div>
<div class="r" style="left:1342.00px;top:1122.00px;width:46.00px;height:40.00px;background:#224f80;border:1px solid #224f80;border-radius:5px;"></div>
<div class="t" style="left:1334.90px;width:60px;text-align:center;top:1132.10px;font-size:20.2px;color:#fff;font-weight:normal;">1</div>
<div class="r" style="left:1391.00px;top:1122.00px;width:45.00px;height:40.00px;border:1.2px solid #d9d9d9;border-radius:5px;background:#fff;"></div>
<div class="t" style="left:1383.85px;width:60px;text-align:center;top:1132.10px;font-size:20.2px;color:#2b78c1;font-weight:normal;">2</div>
<div class="r" style="left:1440.00px;top:1122.00px;width:45.00px;height:40.00px;border:1.2px solid #d9d9d9;border-radius:5px;background:#fff;"></div>
<div class="t" style="left:1432.10px;width:60px;text-align:center;top:1132.10px;font-size:20.2px;color:#2b78c1;font-weight:normal;">3</div>
<div class="r" style="left:1488.00px;top:1122.00px;width:45.00px;height:40.00px;border:1.2px solid #d9d9d9;border-radius:5px;background:#fff;"></div>
<div class="t" style="left:1480.80px;width:60px;text-align:center;top:1132.10px;font-size:20.2px;color:#2b78c1;font-weight:normal;">4</div>
<div class="r" style="left:1537.00px;top:1122.00px;width:45.00px;height:40.00px;border:1.2px solid #d9d9d9;border-radius:5px;background:#fff;"></div>
<div class="t" style="left:1529.10px;width:60px;text-align:center;top:1132.10px;font-size:20.2px;color:#2b78c1;font-weight:normal;">5</div>
<div class="r" style="left:1584.00px;top:1122.00px;width:42.00px;height:40.00px;border:1.2px solid #d9d9d9;border-radius:5px;background:#fff;"></div>
<div class="t" style="left:1575.00px;width:60px;text-align:center;top:1132.10px;font-size:20.2px;color:#2b78c1;font-weight:normal;">›</div>
<div class="r" style="left:1630.00px;top:1122.00px;width:45.00px;height:40.00px;border:1.2px solid #d9d9d9;border-radius:5px;background:#fff;"></div>
<div class="t" style="left:1622.00px;width:60px;text-align:center;top:1132.10px;font-size:20.2px;color:#2b78c1;font-weight:normal;">»</div>
<div class="r" style="left:399.00px;top:1217.00px;width:1698.00px;height:17.00px;background:#f1f1f1;"></div>
<div class="r" style="left:416.00px;top:1217.00px;width:151.00px;height:17.00px;background:#c9c9c9;"></div>
<svg class="i" style="left:403.00px;top:1221.50px;" width="8" height="9" viewBox="0 0 8 9" fill="currentColor"><path d="M5.5 1L2 4.5L5.5 8" fill="none" stroke="#505050" stroke-width="1.8"/></svg>
<div class="r" style="left:1079.00px;top:128.00px;width:303.00px;height:106.00px;border:1px solid rgba(0,0,0,.15);border-radius:5px;background:#fff;box-shadow:0 6px 12px rgba(0,0,0,.175);"></div>
<div class="t" style="left:1102.77px;top:143.10px;font-size:16.8px;color:#333;font-weight:normal;">Antworten exportieren</div>
<div class="t" style="left:1102.77px;top:174.10px;font-size:16.8px;color:#333;font-weight:normal;">Antworten nach SPSS exportieren</div>
<div class="t" style="left:1102.73px;top:205.10px;font-size:16.8px;color:#333;font-weight:normal;">VV-Umfrage-Datei exportieren</div>
</body></html>
